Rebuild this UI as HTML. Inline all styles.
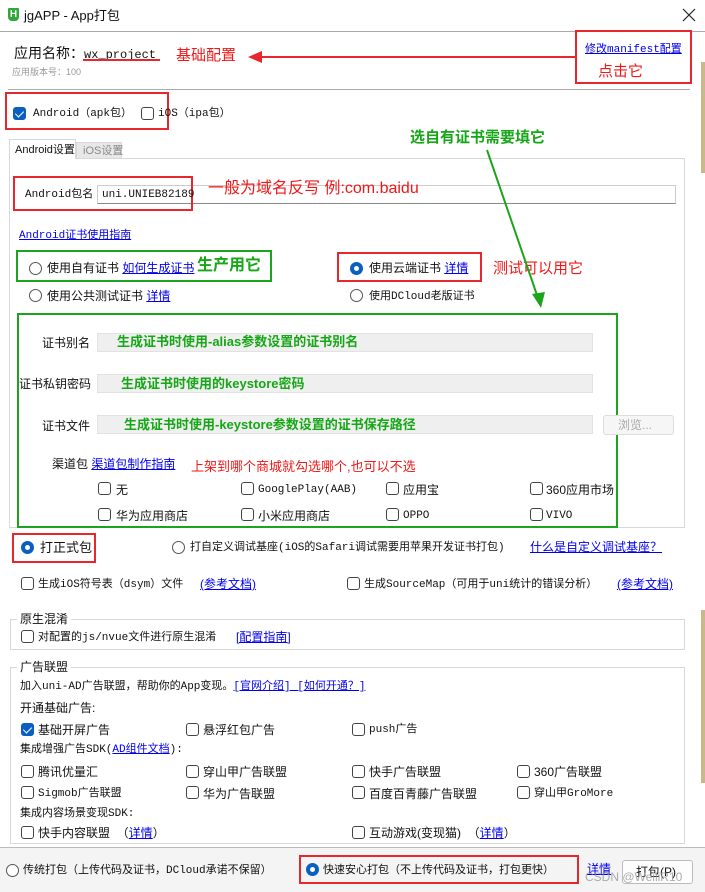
<!DOCTYPE html>
<html><head><meta charset="utf-8"><style>
*{margin:0;padding:0;box-sizing:border-box}
body{width:705px;height:892px;position:relative;background:#fff;font-family:"Liberation Sans","Noto Sans CJK SC",sans-serif;font-size:12px;color:#111;overflow:hidden}
.a{position:absolute;white-space:nowrap;line-height:14px}
.m{font-family:"Liberation Mono","Noto Sans CJK SC",monospace;font-size:11px}
.lk{color:#0000ee;text-decoration:underline}
.r{color:#f01818;font-size:15px;line-height:18px}
.g{color:#16a716;font-weight:bold}
.cb{position:absolute;width:13px;height:13px;border:1px solid #444;border-radius:3px;background:#fff}
.cb.on{background:#0a5fc0;border-color:#0a5fc0}
.cb.on:after{content:"";position:absolute;left:3px;top:1px;width:4px;height:7px;border:solid #fff;border-width:0 1.5px 1.5px 0;transform:rotate(45deg)}
.rd{position:absolute;width:13px;height:13px;border:1px solid #555;border-radius:50%;background:#fff}
.rd.on{background:#0a5fc0;border-color:#0a5fc0}
.rd.on:after{content:"";position:absolute;left:3px;top:3px;width:5px;height:5px;border-radius:50%;background:#fff}
.box{position:absolute;border:2px solid #e8262d}
.gb{position:absolute;border:2px solid #1ca51c}
.inp{position:absolute;background:#efefef;border:1px solid #e2e2e2}
.fs{position:absolute;border:1px solid #d8d8d8}
</style></head><body>
<div class="a" style="left:8px;top:8px;width:11px;height:13px;background:#2fa83a;border-radius:1px 1px 4px 4px;color:#fff;font-size:10px;font-weight:bold;text-align:center;line-height:13px">H</div>
<div class="a" style="left:24px;top:8px;font-size:13px;line-height:16px">jgAPP - App打包</div>
<svg class="a" style="left:682px;top:8px" width="14" height="14"><path d="M1 1L13 13M13 1L1 13" stroke="#222" stroke-width="1.2"/></svg>
<div class="a" style="left:0;top:31px;width:705px;height:1px;background:#a8a8a8"></div>
<div class="a" style="left:701px;top:62px;width:4px;height:111px;background:#c9b98a"></div>
<div class="a" style="left:701px;top:610px;width:4px;height:173px;background:#c9b98a"></div>

<div class="a" style="left:14px;top:45px;font-size:14px;line-height:16px">应用名称：<span class="m" style="font-size:12px">wx_project</span></div>
<div class="a" style="left:83px;top:59px;width:77px;height:2px;background:#e8262d"></div>
<div class="a r" style="left:176px;top:47px">基础配置</div>
<div class="a" style="left:260px;top:56px;width:315px;height:2px;background:#e8262d"></div>
<div class="a" style="left:248px;top:51px;width:0;height:0;border-top:6px solid transparent;border-bottom:6px solid transparent;border-right:14px solid #e8262d"></div>
<div class="a" style="left:12px;top:65px;font-size:9px;color:#999">应用版本号：100</div>
<div class="box" style="left:575px;top:30px;width:117px;height:54px"></div>
<div class="a lk m" style="left:585px;top:43px">修改manifest配置</div>
<div class="a r" style="left:598px;top:63px">点击它</div>
<div class="a" style="left:8px;top:89px;width:682px;height:1px;background:#aaa"></div>

<div class="box" style="left:5px;top:92px;width:164px;height:38px"></div>
<div class="cb on" style="left:13px;top:107px"></div><div class="a m" style="left:33px;top:107px">Android（apk包）</div>
<div class="cb" style="left:141px;top:107px"></div><div class="a m" style="left:158px;top:107px">iOS（ipa包）</div>

<div class="a g" style="left:410px;top:129px;font-size:15px;line-height:18px">选自有证书需要填它</div>
<div class="fs" style="left:9px;top:158px;width:676px;height:370px"></div>
<div class="a" style="left:76px;top:142px;width:46px;height:17px;background:#e8e8e8;border:1px solid #d8d8d8"></div>
<div class="a" style="left:83px;top:144px;color:#888;font-size:11px">iOS设置</div>
<div class="a" style="left:9px;top:139px;width:67px;height:20px;background:#fff;border:1px solid #d8d8d8;border-bottom:none"></div>
<div class="a" style="left:15px;top:143px;font-size:11px">Android设置</div>

<div class="inp" style="left:97px;top:185px;width:579px;height:19px;background:#fff;border-color:#ccc;border-bottom-color:#888"></div>
<div class="box" style="left:13px;top:176px;width:180px;height:35px"></div>
<div class="a m" style="left:25px;top:188px">Android包名</div>
<div class="a m" style="left:102px;top:188px">uni.UNIEB82189</div>
<div class="a r" style="left:208px;top:180px;font-size:16px">一般为域名反写 例:com.baidu</div>
<div class="a lk m" style="left:19px;top:229px">Android证书使用指南</div>

<div class="gb" style="left:16px;top:250px;width:256px;height:32px"></div>
<div class="rd" style="left:29px;top:262px"></div><div class="a" style="left:47px;top:261px">使用自有证书 <span class="lk">如何生成证书</span></div>
<div class="a g" style="left:197px;top:256px;font-size:16px;line-height:20px">生产用它</div>
<div class="box" style="left:337px;top:252px;width:145px;height:30px"></div>
<div class="rd on" style="left:350px;top:262px"></div><div class="a" style="left:369px;top:261px">使用云端证书 <span class="lk">详情</span></div>
<div class="a r" style="left:493px;top:260px">测试可以用它</div>
<div class="rd" style="left:29px;top:289px"></div><div class="a" style="left:47px;top:289px">使用公共测试证书 <span class="lk">详情</span></div>
<div class="rd" style="left:350px;top:289px"></div><div class="a m" style="left:369px;top:290px">使用DCloud老版证书</div>

<svg class="a" style="left:0;top:0" width="705" height="892"><line x1="487" y1="150" x2="538" y2="298" stroke="#1ca51c" stroke-width="2"/><polygon points="532,294 545,292 541,308" fill="#1ca51c"/></svg>

<div class="gb" style="left:17px;top:313px;width:601px;height:215px"></div>
<div class="a" style="left:42px;top:336px">证书别名</div>
<div class="inp" style="left:97px;top:333px;width:496px;height:19px"></div>
<div class="a g" style="left:117px;top:335px;font-size:13px">生成证书时使用-alias参数设置的证书别名</div>
<div class="a" style="left:19px;top:377px">证书私钥密码</div>
<div class="inp" style="left:97px;top:374px;width:496px;height:19px"></div>
<div class="a g" style="left:121px;top:377px;font-size:13px">生成证书时使用的keystore密码</div>
<div class="a" style="left:42px;top:419px">证书文件</div>
<div class="inp" style="left:97px;top:415px;width:496px;height:19px"></div>
<div class="a g" style="left:124px;top:418px;font-size:13px">生成证书时使用-keystore参数设置的证书保存路径</div>
<div class="a" style="left:603px;top:415px;width:71px;height:20px;border:1px solid #ddd;border-radius:3px;background:#f6f6f6;color:#aaa;padding:2px 0 0 14px">浏览...</div>
<div class="a" style="left:52px;top:457px">渠道包 <span class="lk">渠道包制作指南</span></div>
<div class="a" style="left:191px;top:460px;color:#f01818;font-size:13px">上架到哪个商城就勾选哪个,也可以不选</div>
<div class="cb" style="left:98px;top:482px"></div><div class="a" style="left:116px;top:483px">无</div>
<div class="cb" style="left:241px;top:482px"></div><div class="a m" style="left:258px;top:483px">GooglePlay(AAB)</div>
<div class="cb" style="left:386px;top:482px"></div><div class="a" style="left:403px;top:483px">应用宝</div>
<div class="cb" style="left:530px;top:482px"></div><div class="a" style="left:546px;top:483px">360应用市场</div>
<div class="cb" style="left:98px;top:508px"></div><div class="a" style="left:116px;top:509px">华为应用商店</div>
<div class="cb" style="left:241px;top:508px"></div><div class="a" style="left:258px;top:509px">小米应用商店</div>
<div class="cb" style="left:386px;top:508px"></div><div class="a m" style="left:403px;top:509px">OPPO</div>
<div class="cb" style="left:530px;top:508px"></div><div class="a m" style="left:546px;top:509px">VIVO</div>

<div class="box" style="left:12px;top:533px;width:84px;height:30px"></div>
<div class="rd on" style="left:21px;top:541px"></div><div class="a" style="left:40px;top:541px;font-size:13px">打正式包</div>
<div class="rd" style="left:172px;top:541px"></div><div class="a m" style="left:190px;top:541px">打自定义调试基座(iOS的Safari调试需要用苹果开发证书打包)</div>
<div class="a lk" style="left:530px;top:540px">什么是自定义调试基座？</div>
<div class="cb" style="left:21px;top:577px"></div><div class="a m" style="left:38px;top:578px">生成iOS符号表（dsym）文件</div><div class="a lk" style="left:200px;top:577px">(参考文档)</div>
<div class="cb" style="left:347px;top:577px"></div><div class="a m" style="left:364px;top:578px">生成SourceMap（可用于uni统计的错误分析）</div><div class="a lk" style="left:617px;top:577px">(参考文档)</div>

<div class="fs" style="left:10px;top:619px;width:675px;height:31px"></div>
<div class="a" style="left:17px;top:612px;background:#fff;padding:0 3px">原生混淆</div>
<div class="cb" style="left:21px;top:630px"></div><div class="a m" style="left:38px;top:631px">对配置的js/nvue文件进行原生混淆</div><div class="a lk" style="left:236px;top:630px">[配置指南]</div>

<div class="fs" style="left:10px;top:667px;width:675px;height:177px"></div>
<div class="a" style="left:17px;top:660px;background:#fff;padding:0 3px">广告联盟</div>
<div class="a m" style="left:20px;top:680px">加入uni-AD广告联盟，帮助你的App变现。<span class="lk">[官网介绍] [如何开通？]</span></div>
<div class="a" style="left:20px;top:701px">开通基础广告:</div>
<div class="cb on" style="left:21px;top:723px"></div><div class="a" style="left:38px;top:723px">基础开屏广告</div>
<div class="cb" style="left:186px;top:723px"></div><div class="a" style="left:203px;top:723px">悬浮红包广告</div>
<div class="cb" style="left:352px;top:723px"></div><div class="a m" style="left:369px;top:723px">push广告</div>
<div class="a m" style="left:20px;top:743px">集成增强广告SDK(<span class="lk">AD组件文档</span>):</div>
<div class="cb" style="left:21px;top:765px"></div><div class="a" style="left:38px;top:765px">腾讯优量汇</div>
<div class="cb" style="left:186px;top:765px"></div><div class="a" style="left:203px;top:765px">穿山甲广告联盟</div>
<div class="cb" style="left:352px;top:765px"></div><div class="a" style="left:369px;top:765px">快手广告联盟</div>
<div class="cb" style="left:517px;top:765px"></div><div class="a" style="left:534px;top:765px">360广告联盟</div>
<div class="cb" style="left:21px;top:786px"></div><div class="a m" style="left:38px;top:787px">Sigmob广告联盟</div>
<div class="cb" style="left:186px;top:786px"></div><div class="a" style="left:203px;top:787px">华为广告联盟</div>
<div class="cb" style="left:352px;top:786px"></div><div class="a" style="left:369px;top:787px">百度百青藤广告联盟</div>
<div class="cb" style="left:517px;top:786px"></div><div class="a m" style="left:534px;top:787px">穿山甲GroMore</div>
<div class="a m" style="left:20px;top:807px">集成内容场景变现SDK:</div>
<div class="cb" style="left:21px;top:826px"></div><div class="a" style="left:38px;top:826px">快手内容联盟 &nbsp;（<span class="lk">详情</span>）</div>
<div class="cb" style="left:352px;top:826px"></div><div class="a" style="left:369px;top:826px">互动游戏(变现猫) &nbsp;（<span class="lk">详情</span>）</div>

<div class="a" style="left:0;top:847px;width:705px;height:45px;background:#f4f4f4;border-top:1px solid #bbb"></div>
<div class="rd" style="left:6px;top:864px"></div><div class="a m" style="left:23px;top:864px">传统打包（上传代码及证书，DCloud承诺不保留）</div>
<div class="box" style="left:299px;top:855px;width:280px;height:29px"></div>
<div class="rd on" style="left:306px;top:863px"></div><div class="a m" style="left:323px;top:864px">快速安心打包（不上传代码及证书，打包更快）</div>
<div class="a lk" style="left:587px;top:862px">详情</div>
<div class="a" style="left:622px;top:860px;width:71px;height:24px;border:1px solid #bbb;border-radius:3px;background:#fdfdfd;padding:4px 0 0 13px">打包(P)</div>
<div class="a" style="left:585px;top:870px;color:rgba(150,150,150,.8);font-size:12px">CSDN @WeiliR10</div>
</body></html>
